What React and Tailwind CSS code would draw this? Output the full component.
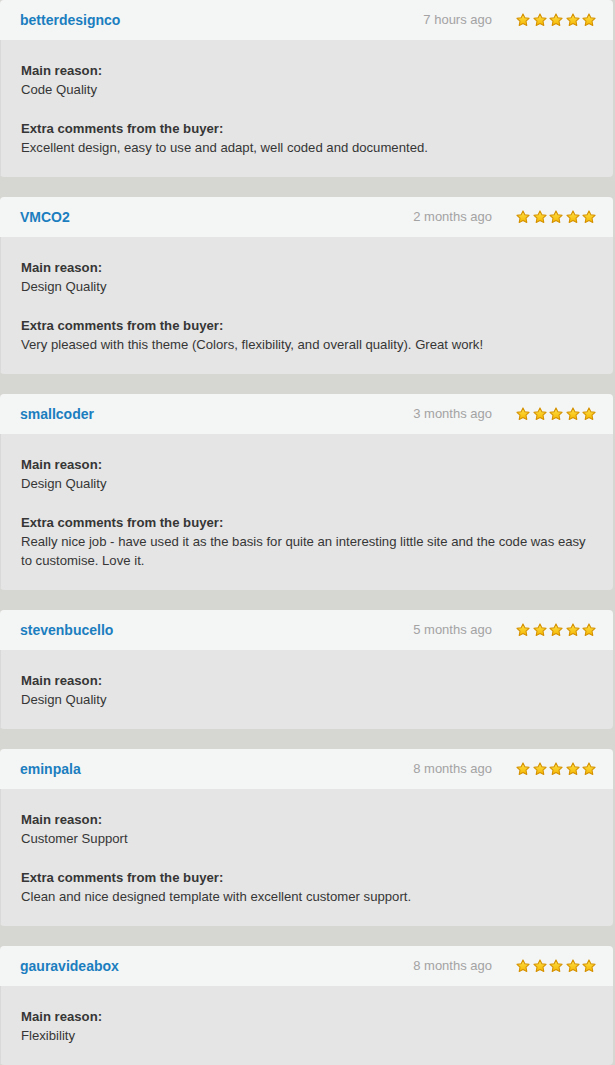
import React from 'react';

const reviews = [
    {
        name: 'betterdesignco',
        time: '7 hours ago',
        reason: 'Code Quality',
        comment: 'Excellent design, easy to use and adapt, well coded and documented.',
    },
    {
        name: 'VMCO2',
        time: '2 months ago',
        reason: 'Design Quality',
        comment: 'Very pleased with this theme (Colors, flexibility, and overall quality). Great work!',
    },
    {
        name: 'smallcoder',
        time: '3 months ago',
        reason: 'Design Quality',
        comment:
            'Really nice job - have used it as the basis for quite an interesting little site and the code was easy to customise. Love it.',
    },
    {
        name: 'stevenbucello',
        time: '5 months ago',
        reason: 'Design Quality',
    },
    {
        name: 'eminpala',
        time: '8 months ago',
        reason: 'Customer Support',
        comment: 'Clean and nice designed template with excellent customer support.',
    },
    {
        name: 'gauravideabox',
        time: '8 months ago',
        reason: 'Flexibility',
    },
];

const Star = () => (
    <svg width="14" height="14" viewBox="0 0 24 24" className="block">
        <defs>
            <linearGradient id="starFill" x1="0" y1="0" x2="0" y2="1">
                <stop offset="0" stopColor="#ffe24d" />
                <stop offset="1" stopColor="#f5b800" />
            </linearGradient>
        </defs>
        <path
            d="M12 1.5l3.2 6.6 7.2 1-5.2 5 1.3 7.2L12 17.9l-6.5 3.4 1.3-7.2-5.2-5 7.2-1z"
            fill="url(#starFill)"
            stroke="#d49100"
            strokeWidth="1.8"
            strokeLinejoin="round"
        />
    </svg>
);

const ReviewCard = ({ review }) => (
    <div className="rounded-[4px] overflow-hidden">
        {/* Header */}
        <div className="h-[40px] bg-[#f4f5f5] flex items-center pl-[20px] pr-[17px]">
            <span className="text-[14px] font-bold text-[#1b7ebf]">{review.name}</span>
            <span className="ml-auto text-[13px] text-[#a3a3a3]">{review.time}</span>
            <div className="flex gap-[2.5px] ml-[24px]">
                <Star />
                <Star />
                <Star />
                <Star />
                <Star />
            </div>
        </div>
        {/* Body */}
        <div className="bg-[#e5e5e5] border-l border-[#d9d9d9] pl-[20px] pr-[20px] pt-[21px] pb-[20px] text-[13.15px] leading-[19px] text-[#363636]">
            <div className="font-bold">Main reason:</div>
            <div>{review.reason}</div>
            {review.comment && (
                <div className="mt-[20px]">
                    <div className="font-bold">Extra comments from the buyer:</div>
                    <div>{review.comment}</div>
                </div>
            )}
        </div>
    </div>
);

const App = () => {
    return (
        <div
            className="min-h-screen bg-[#d6d6d2] flex flex-col gap-[20px] pr-[2px]"
            style={{ fontFamily: '"Liberation Sans", Arial, sans-serif' }}
        >
            {reviews.map((r) => (
                <ReviewCard key={r.name} review={r} />
            ))}
        </div>
    );
};

export default App;
